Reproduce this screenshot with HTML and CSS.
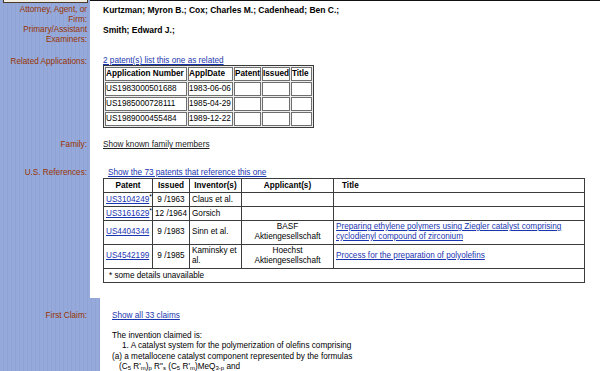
FILE: index.html
```html
<!DOCTYPE html>
<html>
<head>
<meta charset="utf-8">
<link rel="stylesheet" href="styles.css">
</head>
<body>
<div class="page">
  <div class="row top"><div class="side"><div class="tab"></div></div><div class="main"></div></div>

  <div class="row r-a">
    <div class="side lbl">Attorney, Agent, or<br>Firm:</div>
    <div class="main bold">Kurtzman; Myron B.; Cox; Charles M.; Cadenhead; Ben C.;</div>
  </div>

  <div class="row">
    <div class="side lbl">Primary/Assistant<br>Examiners:</div>
    <div class="main bold">Smith; Edward J.;</div>
  </div>

  <div class="row r-c">
    <div class="side lbl">Related Applications:</div>
    <div class="main">
      <div class="toplink"><a href="#" class="lnk">2 patent(s) list this one as related</a></div>
      <table class="rel">
        <tr><th class="c1">Application Number</th><th class="c2">ApplDate</th><th class="c3">Patent</th><th class="c4">Issued</th><th class="c5">Title</th></tr>
        <tr><td>US1983000501688</td><td>1983-06-06</td><td></td><td></td><td></td></tr>
        <tr><td>US1985000728111</td><td>1985-04-29</td><td></td><td></td><td></td></tr>
        <tr><td>US1989000455484</td><td>1989-12-22</td><td></td><td></td><td></td></tr>
      </table>
    </div>
  </div>

  <div class="row r-d">
    <div class="side lbl">Family:</div>
    <div class="main"><a href="#" class="fam">Show known family members</a></div>
  </div>

  <div class="row r-e">
    <div class="side lbl">U.S. References:</div>
    <div class="main">
      <div class="reflink"><a href="#" class="lnk">Show the 73 patents that reference this one</a></div>
      <table class="refs">
        <tr class="one"><th class="k1">Patent</th><th class="k2">Issued</th><th class="k3">Inventor(s)</th><th class="k4">Applicant(s)</th><th class="k5 tl">Title</th></tr>
        <tr class="one"><td><a href="#" class="lnk">US3104249</a><sup>*</sup></td><td class="ctr">9 /1963</td><td>Claus et al.</td><td></td><td></td></tr>
        <tr class="one"><td><a href="#" class="lnk">US3161629</a><sup>*</sup></td><td class="ctr">12 /1964</td><td>Gorsich</td><td></td><td></td></tr>
        <tr class="two"><td><a href="#" class="lnk">US4404344</a></td><td class="ctr">9 /1983</td><td>Sinn et al.</td><td class="ctr">BASF<br>Aktiengesellschaft</td><td><a href="#" class="lnk">Preparing ethylene polymers using Ziegler catalyst comprising cyclodienyl compound of zirconium</a></td></tr>
        <tr class="two"><td><a href="#" class="lnk">US4542199</a></td><td class="ctr">9 /1985</td><td>Kaminsky et al.</td><td class="ctr">Hoechst<br>Aktiengesellschaft</td><td><a href="#" class="lnk">Process for the preparation of polyolefins</a></td></tr>
        <tr class="foot"><td colspan="5">* some details unavailable</td></tr>
      </table>
    </div>
  </div>

  <div class="row wide r-f">
    <div class="side lbl">First Claim:</div>
    <div class="main">
      <a href="#" class="lnk">Show all 33 claims</a>
      <div class="claim">
        <div>The invention claimed is:</div>
        <div class="ind">1. A catalyst system for the polymerization of olefins comprising</div>
        <div>(a) a metallocene catalyst component represented by the formulas</div>
        <div class="ind2">(C<sub>5</sub> R'<sub>m</sub>)<sub>p</sub> R"<sub>s</sub> (C<sub>5</sub> R'<sub>m</sub>)MeQ<sub>3-p</sub> and</div>
      </div>
    </div>
  </div>
</div>
</body>
</html>
```

FILE: styles.css
```css
* { box-sizing: border-box; }
html, body { margin: 0; padding: 0; }
body {
  width: 600px;
  height: 371px;
  overflow: hidden;
  background: #fff;
  font-family: "Liberation Sans", Arial, sans-serif;
  font-size: 8.2px;
  line-height: 10px;
  color: #000;
}
.page { width: 600px; height: 371px; display: flex; flex-direction: column; }
.row { display: grid; grid-template-columns: 90px 1fr; }
.row.wide { grid-template-columns: 100px 1fr; flex: 1; }
.side {
  background: repeating-linear-gradient(90deg, #95aadb 0 3px, #8fa4d5 3px 4px);
}
.lbl { text-align: right; padding-right: 3px; color: #993300; }
.wide .lbl { padding-right: 13px; }
.main { padding-left: 13px; background: #fff; }
.wide .main { padding-left: 12px; }
.bold { font-weight: bold; font-size: 8.5px; }

.top { height: 3px; }
.top .main { border-top: 1px solid #111; }
.tab { margin: 0 2px 0 3px; height: 3px; border: 1px solid #4a3a2a; border-top: none; background: #f2eee4; }

.r-a > div { padding-top: 2px; }
.r-c > div { padding-top: 12px; }
.toplink { line-height: 8px; height: 8px; }
.lnk { color: #1a35b0; text-decoration: underline; }
.fam { color: #222; text-decoration: underline; }

.rel {
  border-collapse: separate;
  border-spacing: 1px 1px;
  border: 1px solid #3a3a3a;
  background: #ececec;
}
.rel th, .rel td {
  border: 1px solid #6e6e6e;
  background: #fff;
  line-height: 12px;
  padding: 0;
  text-align: left;
  white-space: nowrap;
  font-weight: normal;
}
.rel th { font-weight: bold; }
.c1 { width: 82px; }
.c2 { width: 45px; }
.c3 { width: 27px; }
.c4 { width: 27px; }
.c5 { width: 21px; }

.r-d > div { padding-top: 12px; }
.r-e > div { padding-top: 18px; padding-bottom: 15px; }
.reflink { padding-left: 5px; }

.refs {
  border-collapse: collapse;
  table-layout: fixed;
  width: 481px;
  border: 1px solid #222;
}
.refs th, .refs td {
  border: 1px solid #3c3c3c;
  padding: 1px 2px;
  vertical-align: middle;
  text-align: left;
}
.refs th { font-weight: bold; text-align: center; line-height: 11px; }
.refs th.tl { text-align: left; padding-left: 8px; }
.refs .one td { line-height: 11px; }
.refs .two td { line-height: 10px; padding-top: 1px; padding-bottom: 2px; }
.refs .foot td { line-height: 11px; padding-left: 5px; }
.refs sup { font-size: 7px; line-height: 0; vertical-align: 3px; }
.ctr { text-align: center !important; }
.k1 { width: 49px; }
.k2 { width: 37px; }
.k3 { width: 52px; }
.k4 { width: 92px; }
.k5 { width: 251px; }

.r-f > div { padding-top: 13px; }
.claim { margin-top: 10px; line-height: 10.4px; }
.claim .ind { padding-left: 10px; }
.claim .ind2 { padding-left: 7px; }
.claim sub { font-size: 6px; line-height: 0; vertical-align: -1px; }
```
